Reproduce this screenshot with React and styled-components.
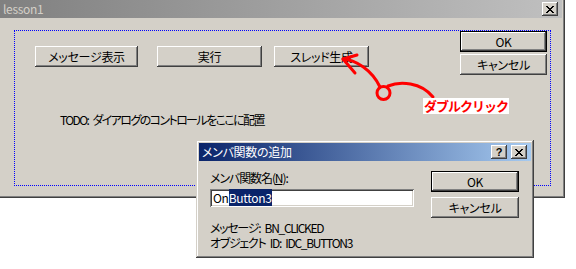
import React from 'react';
import styled, {createGlobalStyle} from 'styled-components';

const GlobalStyle = createGlobalStyle`
  html, body {
    margin: 0;
    padding: 0;
    background: #FFFFFF;
  }
  body {
    font-family: "Noto Sans CJK JP", "Liberation Sans", sans-serif;
    font-size: 12px;
    color: #000000;
    font-feature-settings: "palt";
  }
`;

const CloseGlyph = () => (
    <svg width="8" height="7" viewBox="0 0 8 7" shapeRendering="crispEdges">
        <path
            fill="#000"
            d="M0 0h2v1h-2zM6 0h2v1h-2zM1 1h2v1h-2zM5 1h2v1h-2zM2 2h4v1h-4zM3 3h2v1h-2zM2 4h4v1h-4zM1 5h2v1h-2zM5 5h2v1h-2zM0 6h2v1h-2zM6 6h2v1h-2z"
        />
    </svg>
);

const App = () => (
    <Page>
        <GlobalStyle/>

        <MainWindow>
            <TitleBar $from="#808080" $to="#C0C0C0" $color="#D4D0C8">
                <TitleText>lesson1</TitleText>
                <CaptionButton><CloseGlyph/></CaptionButton>
            </TitleBar>

            <Body>
                <Placeholder>
                    <LeftArea>
                        <ButtonRow>
                            <Button $w={103}>メッセージ表示</Button>
                            <Button $w={105} $ml={19}>実行</Button>
                            <Button $w={95} $ml={12}>スレッド生成</Button>
                        </ButtonRow>

                        <Todo>TODO: ダイアログのコントロールをここに配置</Todo>
                    </LeftArea>

                    <ButtonColumn $gap={2} $pr={3}>
                        <Button $w={87} $default>OK</Button>
                        <Button $w={87}>キャンセル</Button>
                    </ButtonColumn>
                </Placeholder>
            </Body>
        </MainWindow>

        <Dialog>
            <TitleBar $from="#0A246A" $to="#A6CAF0" $color="#FFFFFF">
                <TitleText>メンバ関数の追加</TitleText>
                <CaptionButton><HelpMark>?</HelpMark></CaptionButton>
                <CaptionButton $ml={2}><CloseGlyph/></CaptionButton>
            </TitleBar>

            <DialogBody>
                <div>
                    <Label>メンバ関数名(<u>N</u>):</Label>

                    <Edit>
                        On<Selected>Button3</Selected>
                    </Edit>

                    <Info>
                        <InfoLine>メッセージ: BN_CLICKED</InfoLine>
                        <InfoLine>オブジェクト ID: IDC_BUTTON3</InfoLine>
                    </Info>
                </div>

                <ButtonColumn $gap={5} $pr={0}>
                    <Button $w={88} $default>OK</Button>
                    <Button $w={88}>キャンセル</Button>
                </ButtonColumn>
            </DialogBody>
        </Dialog>

        <Annotation width="576" height="269" viewBox="0 0 576 269">
            <g fill="none" stroke="#FF0000" strokeWidth="3" strokeLinecap="round" strokeLinejoin="round">
                <path d="M357 55 L343 59 L355 73"/>
                <path d="M343 59 C356 60 372 70 380 87"/>
                <circle cx="383.5" cy="93" r="6.5"/>
                <path d="M388 86 C400 81 421 82 433 97"/>
            </g>
        </Annotation>

        <Callout>ダブルクリック</Callout>
    </Page>
);

const Page = styled.div`
  position: relative;
  width: 576px;
  height: 269px;
  overflow: hidden;
`;

const MainWindow = styled.div`
  width: 565px;
  height: 198px;
  box-sizing: border-box;
  display: flex;
  flex-direction: column;
  background: #D4D0C8;
  border-right: 1px solid #404040;
  border-bottom: 1px solid #404040;
  box-shadow: inset -1px -1px #808080;
  padding: 0 2px 2px 0;
`;

const TitleBar = styled.div`
  height: 18px;
  flex-shrink: 0;
  display: flex;
  align-items: center;
  padding: 0 2px 0 3px;
  background: linear-gradient(to right, ${p => p.$from}, ${p => p.$to});
  color: ${p => p.$color};
`;

const TitleText = styled.div`
  flex: 1;
  line-height: 14px;
  letter-spacing: -0.3px;
  white-space: nowrap;
`;

const CaptionButton = styled.div`
  width: 16px;
  height: 14px;
  box-sizing: border-box;
  margin-left: ${p => p.$ml || 0}px;
  margin-right: 2px;
  display: flex;
  align-items: center;
  justify-content: center;
  background: #D4D0C8;
  box-shadow: inset -1px -1px #404040, inset 1px 1px #FFFFFF, inset -2px -2px #808080;
  color: #000000;
`;

const HelpMark = styled.span`
  font-family: "Liberation Sans", sans-serif;
  font-weight: bold;
  font-size: 11px;
  line-height: 11px;
`;

const Body = styled.div`
  flex: 1;
  display: flex;
  padding: 12px 11px 9px 14px;
`;

const Placeholder = styled.div`
  flex: 1;
  display: grid;
  grid-template-columns: 1fr auto;
  border: 1px dotted #0000FF;
`;

const LeftArea = styled.div`
  padding: 15px 0 0 20px;
`;

const ButtonRow = styled.div`
  display: flex;
`;

const Button = styled.button`
  width: ${p => p.$w}px;
  height: 21px;
  margin: 0 0 0 ${p => p.$ml || 0}px;
  padding: 0;
  box-sizing: border-box;
  font: inherit;
  color: #000000;
  background: #D4D0C8;
  border: ${p => p.$default ? '1px solid #000000' : 'none'};
  box-shadow: inset -1px -1px #404040, inset 1px 1px #FFFFFF, inset -2px -2px #808080;
  line-height: 14px;
  letter-spacing: -0.3px;
  white-space: nowrap;
`;

const ButtonColumn = styled.div`
  display: flex;
  flex-direction: column;
  gap: ${p => p.$gap}px;
  padding-right: ${p => p.$pr}px;
`;

const Todo = styled.div`
  margin: 46px 0 0 25px;
  line-height: 14px;
  letter-spacing: -1.6px;
  word-spacing: 3px;
  white-space: nowrap;
`;

const Dialog = styled.div`
  position: absolute;
  left: 196px;
  top: 140px;
  width: 338px;
  height: 118px;
  box-sizing: border-box;
  display: flex;
  flex-direction: column;
  padding: 3px;
  background: #D4D0C8;
  box-shadow: inset -1px -1px #404040, inset 1px 1px #D4D0C8, inset -2px -2px #808080, inset 2px 2px #FFFFFF;
`;

const DialogBody = styled.div`
  flex: 1;
  display: grid;
  grid-template-columns: 1fr auto;
  padding: 10px 12px 0 11px;
`;

const Label = styled.div`
  line-height: 14px;
  letter-spacing: -1.1px;
  white-space: nowrap;
`;

const Edit = styled.div`
  width: 204px;
  height: 18px;
  box-sizing: border-box;
  margin-top: 4px;
  padding: 2px 3px 0;
  background: #FFFFFF;
  box-shadow: inset 1px 1px #808080, inset -1px -1px #FFFFFF, inset 2px 2px #404040, inset -2px -2px #D4D0C8;
  line-height: 14px;
  letter-spacing: -0.3px;
  white-space: nowrap;
`;

const Selected = styled.span`
  background: #0A246A;
  color: #FFFFFF;
`;

const Info = styled.div`
  margin-top: 14px;
  display: flex;
  flex-direction: column;
  gap: 1px;
`;

const InfoLine = styled.div`
  line-height: 14px;
  letter-spacing: -1.3px;
  word-spacing: 3px;
  white-space: nowrap;
`;

const Annotation = styled.svg`
  position: absolute;
  left: 0;
  top: 0;
  pointer-events: none;
`;

const Callout = styled.div`
  position: absolute;
  left: 423px;
  top: 98px;
  width: 86px;
  height: 16px;
  background: #FFFFFF;
  color: #FF0000;
  font-weight: bold;
  font-size: 13px;
  line-height: 16px;
  letter-spacing: -1px;
  font-feature-settings: normal;
  text-align: center;
  white-space: nowrap;
`;

export default App;
